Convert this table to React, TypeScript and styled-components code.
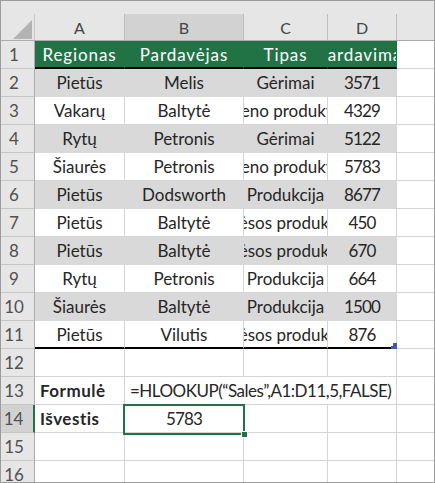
import React from "react";
import styled, { createGlobalStyle, css } from "styled-components";

const Global = createGlobalStyle`
  html, body { margin: 0; padding: 0; background: #ffffff; }
  body { font-family: Lato, "Open Sans", sans-serif; }
`;

const GREEN = "#217346";

const Frame = styled.div`
  width: 435px;
  height: 483px;
  box-sizing: border-box;
  border: 1px solid #9c9c9c;
  overflow: hidden;
  background: #ffffff;
`;

const Sheet = styled.div`
  display: grid;
  grid-template-columns: 34px 90px 119px 84px 69px 1fr;
  grid-template-rows: 40px repeat(16, 28px);
  font-family: Lato, "Open Sans", sans-serif;
`;

const Corner = styled.div`
  box-sizing: border-box;
  padding-top: 13px;
  background: #e6e6e6;
  border-bottom: 1px solid #ababab;
  display: flex;
`;

const CornerBox = styled.div`
  flex: 1;
  display: flex;
  align-items: flex-end;
  justify-content: flex-end;
  padding: 0 2px 1px 0;
  border-right: 1px solid #c8c8c8;
`;

const Triangle = styled.div`
  width: 19px;
  height: 19px;
  background: #b3b3b3;
  clip-path: polygon(100% 0, 100% 100%, 0 100%);
`;

const ColHeader = styled.div`
  box-sizing: border-box;
  padding-top: 13px;
  background: #e6e6e6;
  border-bottom: 1px solid #ababab;
  display: flex;
`;

const ColLabel = styled.div<{ $selected?: boolean; $last?: boolean }>`
  flex: 1;
  display: flex;
  align-items: center;
  justify-content: center;
  font-size: 16px;
  color: #444444;
  background: ${(p) => (p.$selected ? "#d2d2d2" : "#e6e6e6")};
  border-right: ${(p) => (p.$last ? "none" : "1px solid #bdbdbd")};
`;

const RowHeader = styled.div<{ $selected?: boolean }>`
  box-sizing: border-box;
  display: flex;
  align-items: center;
  justify-content: center;
  padding-right: 7px;
  font-size: 17px;
  color: #505050;
  background: ${(p) => (p.$selected ? "#d2d2d2" : "#e6e6e6")};
  border-bottom: 1px solid #c6c6c6;
  border-right: ${(p) => (p.$selected ? `2px solid ${GREEN}` : "1px solid #ababab")};
`;

type Tone = "head" | "band" | "plain";

const Cell = styled.div<{
  $tone?: Tone;
  $edge?: boolean;
  $rule?: boolean;
  $align?: "center" | "left";
  $bold?: boolean;
  $open?: boolean;
  $span?: number;
  $last?: boolean;
  $num?: boolean;
  $tight?: boolean;
}>`
  position: relative;
  box-sizing: border-box;
  display: flex;
  align-items: center;
  justify-content: ${(p) => (p.$align === "left" ? "flex-start" : "center")};
  padding: ${(p) => (p.$align === "left" ? "0 0 0 5px" : "0")};
  white-space: nowrap;
  overflow: ${(p) => (p.$open ? "visible" : "hidden")};
  font-size: 17px;
  font-weight: ${(p) => (p.$bold ? 700 : 400)};
  letter-spacing: ${(p) =>
    p.$bold ? "0.5px" : p.$num ? "-0.8px" : p.$tight ? "-0.5px" : "0"};
  color: #262626;
  background: #ffffff;
  border-right: 1px solid #d4d4d4;
  border-bottom: 1px solid #d4d4d4;
  ${(p) => p.$span && css`grid-column: span ${p.$span};`}
  ${(p) => p.$last && css`border-right: none;`}
  ${(p) =>
    p.$tone === "band" &&
    css`
      background: #d9d9d9;
      border-bottom-color: #d9d9d9;
      border-right-color: ${p.$edge ? "#d4d4d4" : "#d9d9d9"};
    `}
  ${(p) =>
    p.$tone === "head" &&
    css`
      background: ${GREEN};
      color: #ffffff;
      letter-spacing: 0.9px;
      border-right-color: ${GREEN};
      border-bottom: 2px solid #000000;
    `}
  ${(p) => p.$rule && css`border-bottom: 2px solid #000000;`}
`;

const ResizeHandle = styled.div`
  position: absolute;
  right: -1px;
  bottom: -2px;
  width: 6px;
  height: 6px;
  background: #4556b8;
  clip-path: polygon(34% 0, 100% 0, 100% 100%, 0 100%, 0 50%, 34% 50%);
  z-index: 2;
`;

const Selection = styled.div`
  position: absolute;
  left: -2px;
  right: -2px;
  top: -1px;
  bottom: -3px;
  border: 2px solid ${GREEN};
  z-index: 3;
  pointer-events: none;
`;

const FillHandle = styled.div`
  position: absolute;
  right: -5px;
  bottom: -5px;
  width: 5px;
  height: 5px;
  background: ${GREEN};
  border: 1px solid #ffffff;
`;

const cols = ["A", "B", "C", "D", "E"];
const heads = ["Regionas", "Pardavėjas", "Tipas", "Pardavimai"];
const data: string[][] = [
  ["Pietūs", "Melis", "Gėrimai", "3571"],
  ["Vakarų", "Baltytė", "Pieno produktai", "4329"],
  ["Rytų", "Petronis", "Gėrimai", "5122"],
  ["Šiaurės", "Petronis", "Pieno produktai", "5783"],
  ["Pietūs", "Dodsworth", "Produkcija", "8677"],
  ["Pietūs", "Baltytė", "Mėsos produktai", "450"],
  ["Pietūs", "Baltytė", "Mėsos produktai", "670"],
  ["Rytų", "Petronis", "Produkcija", "664"],
  ["Šiaurės", "Baltytė", "Produkcija", "1500"],
  ["Pietūs", "Vilutis", "Mėsos produktai", "876"],
];

const EmptyRow: React.FC<{ n: number }> = ({ n }) => (
  <>
    <RowHeader>{n}</RowHeader>
    {cols.map((c) => (
      <Cell key={c} $last={c === "E"} />
    ))}
  </>
);

export default function App() {
  return (
    <>
      <Global />
      <Frame>
        <Sheet>
          <Corner>
            <CornerBox>
              <Triangle />
            </CornerBox>
          </Corner>
          {cols.map((c) => (
            <ColHeader key={c}>
              <ColLabel $selected={c === "B"} $last={c === "E"}>
                {c === "E" ? "" : c}
              </ColLabel>
            </ColHeader>
          ))}

          <RowHeader>1</RowHeader>
          {heads.map((h) => (
            <Cell key={h} $tone="head">
              {h}
            </Cell>
          ))}
          <Cell $last />

          {data.map((row, i) => {
            const n = i + 2;
            const tone: Tone = n % 2 === 0 ? "band" : "plain";
            const isLast = n === 11;
            return (
              <React.Fragment key={n}>
                <RowHeader>{n}</RowHeader>
                {row.map((v, j) => (
                  <Cell
                    key={j}
                    $tone={tone}
                    $edge={j === 3}
                    $num={j === 3}
                    $rule={isLast}
                    $open={isLast && j === 3}
                  >
                    {v}
                    {isLast && j === 3 && <ResizeHandle />}
                  </Cell>
                ))}
                <Cell $last />
              </React.Fragment>
            );
          })}

          <EmptyRow n={12} />

          <RowHeader>13</RowHeader>
          <Cell $align="left" $bold>
            Formulė
          </Cell>
          <Cell $align="left" $span={3} $open $tight>
            =HLOOKUP(“Sales”,A1:D11,5,FALSE)
          </Cell>
          <Cell $last />

          <RowHeader $selected>14</RowHeader>
          <Cell $align="left" $bold>
            Išvestis
          </Cell>
          <Cell $open $num>
            5783
            <Selection>
              <FillHandle />
            </Selection>
          </Cell>
          <Cell />
          <Cell />
          <Cell $last />

          <EmptyRow n={15} />
          <EmptyRow n={16} />
        </Sheet>
      </Frame>
    </>
  );
}
